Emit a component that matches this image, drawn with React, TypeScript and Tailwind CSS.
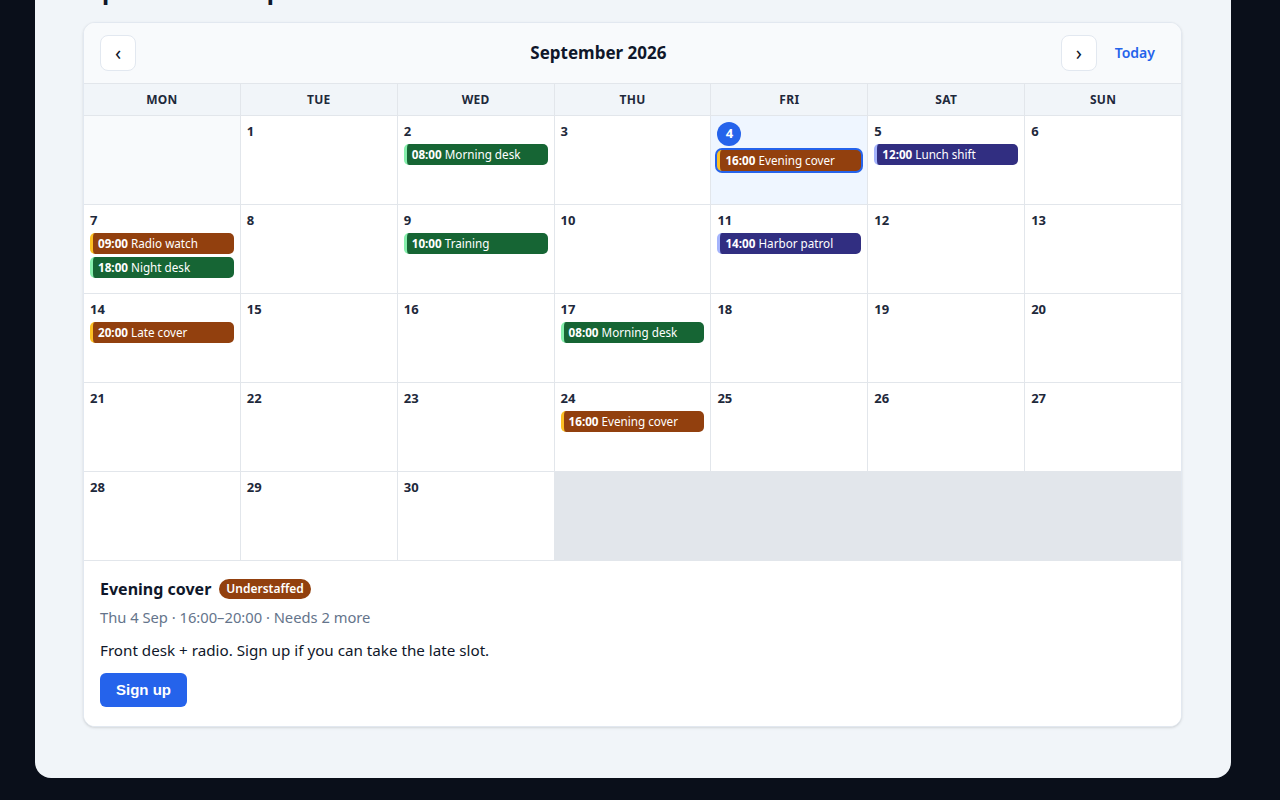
import { useLayoutEffect } from 'react';

type Tone = 'amber' | 'green' | 'indigo';

const CHIP: Record<Tone, string> = {
  amber: 'bg-[#92400e] border-[#fbbf24]',
  green: 'bg-[#166534] border-[#86efac]',
  indigo: 'bg-[#312e81] border-[#a5b4fc]',
};

const EVENTS: Record<number, { time: string; title: string; tone: Tone; selected?: boolean }[]> = {
  2: [{ time: '08:00', title: 'Morning desk', tone: 'green' }],
  4: [{ time: '16:00', title: 'Evening cover', tone: 'amber', selected: true }],
  5: [{ time: '12:00', title: 'Lunch shift', tone: 'indigo' }],
  7: [
    { time: '09:00', title: 'Radio watch', tone: 'amber' },
    { time: '18:00', title: 'Night desk', tone: 'green' },
  ],
  9: [{ time: '10:00', title: 'Training', tone: 'green' }],
  11: [{ time: '14:00', title: 'Harbor patrol', tone: 'indigo' }],
  14: [{ time: '20:00', title: 'Late cover', tone: 'amber' }],
  17: [{ time: '08:00', title: 'Morning desk', tone: 'green' }],
  24: [{ time: '16:00', title: 'Evening cover', tone: 'amber' }],
};

const DAYS = ['MON', 'TUE', 'WED', 'THU', 'FRI', 'SAT', 'SUN'];
const TODAY = 4;

export default function App() {
  // the reference is photographed scrolled to the bottom of the page
  useLayoutEffect(() => {
    window.scrollTo(0, document.documentElement.scrollHeight);
  }, []);

  const dates = Array.from({ length: 30 }, (_, i) => i + 1);

  return (
    <div className="min-h-screen bg-[#0a0f1a] pt-6 pr-[49px] pb-[22px] pl-[35px] font-['Noto_Sans',sans-serif]">
      <div className="rounded-2xl bg-[#f1f5f9] pt-12 pr-[49px] pb-[51px] pl-12">
        <h1 className="mb-4 text-2xl font-bold text-[#0f172a]">Open shifts · September</h1>

        <div className="overflow-hidden rounded-xl border border-[#e2e8f0] bg-white shadow-sm">
          {/* Header */}
          <div className="flex items-center justify-between border-b border-[#e2e6eb] bg-[#f8fafc] px-4 py-3">
            <button className="flex h-9 w-9 items-center justify-center rounded-lg border border-[#e2e8f0] bg-white text-xl leading-none text-[#0f172a]">
              ‹
            </button>
            <h2 className="text-[17px] font-bold text-[#0f172a]">September 2026</h2>
            <div className="flex items-center gap-2">
              <button className="flex h-9 w-9 items-center justify-center rounded-lg border border-[#e2e8f0] bg-white text-xl leading-none text-[#0f172a]">
                ›
              </button>
              <button className="px-2.5 text-sm font-semibold text-[#2563eb]">Today</button>
            </div>
          </div>

          {/* Grid */}
          <div className="grid grid-cols-7 gap-px bg-[#e2e6eb]">
            {DAYS.map((d) => (
              <div
                key={d}
                className="flex h-[31px] items-center justify-center bg-[#f1f5f9] text-xs font-bold tracking-wide text-[#1e293b]"
              >
                {d}
              </div>
            ))}
            <div className="h-[88px] bg-[#f8fafc]" />
            {dates.map((n) => {
              const isToday = n === TODAY;
              return (
                <div key={n} className={`h-[88px] p-1.5 ${isToday ? 'bg-[#eff6ff]' : 'bg-white'}`}>
                  {isToday ? (
                    <div className="flex h-6 w-6 items-center justify-center rounded-full bg-[#2563eb] text-[13px] font-bold text-white">
                      {n}
                    </div>
                  ) : (
                    <div className="text-[13px] leading-[18px] font-bold text-[#1e293b]">{n}</div>
                  )}
                  <div className="mt-1 flex flex-col gap-[3px]">
                    {(EVENTS[n] ?? []).map((e, i) => (
                      <div
                        key={i}
                        className={`h-[21px] truncate rounded-[5px] border-l-[3px] px-[5px] text-[0.73rem] leading-[21px] text-white ${CHIP[e.tone]} ${
                          e.selected ? 'ring-2 ring-[#2563eb]' : ''
                        }`}
                      >
                        <span className="font-bold">{e.time}</span> {e.title}
                      </div>
                    ))}
                  </div>
                </div>
              );
            })}
          </div>

          {/* Detail */}
          <div className="border-t border-[#e2e6eb] bg-white px-4 pt-4 pb-[19px]">
            <div className="flex items-center gap-2">
              <h3 className="text-base leading-6 font-bold text-[#0f172a]">Evening cover</h3>
              <span className="rounded-full bg-[#92400e] px-[7px] py-0.5 text-xs font-semibold text-white">
                Understaffed
              </span>
            </div>
            <p className="mt-1.5 text-[0.92rem] leading-5 text-[#64748b]">Thu 4 Sep · 16:00–20:00 · Needs 2 more</p>
            <p className="mt-3 text-[0.95rem] leading-[22px] text-[#0f172a]">
              Front desk + radio. Sign up if you can take the late slot.
            </p>
            <button className="mt-3 h-[34px] rounded-md bg-[#2563eb] px-4 font-['Liberation_Sans',Arial,sans-serif] text-[15px] font-bold text-white">
              Sign up
            </button>
          </div>
        </div>
      </div>
    </div>
  );
}
